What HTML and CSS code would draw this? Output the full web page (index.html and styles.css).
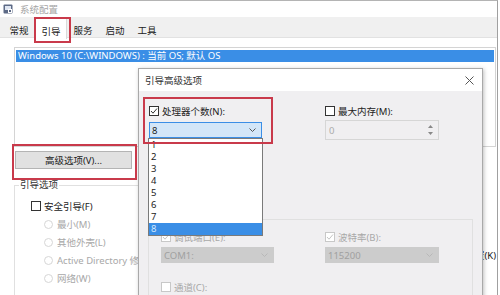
FILE: index.html
```html
<!DOCTYPE html>
<html lang="zh-CN">
<head>
  <meta charset="UTF-8" />
  <title>系统配置</title>
  <link rel="stylesheet" href="styles.css">
</head>
<body>
  <div class="window">
    <div class="titlebar">
      <svg class="app-icon" width="10" height="10" viewBox="0 0 10 10">
        <rect x="0.5" y="0.5" width="9" height="9" rx="1" fill="#5d6a86"/>
        <rect x="2" y="2" width="6" height="4" fill="#dfe6f2"/>
        <rect x="5" y="5" width="4" height="4" fill="#fff"/>
        <rect x="6" y="6" width="2" height="2" fill="#5d6a86"/>
      </svg>
      <span>系统配置</span>
    </div>

    <div class="tabs">
      <div class="tab">常规</div>
      <div class="tab active">引导</div>
      <div class="tab">服务</div>
      <div class="tab">启动</div>
      <div class="tab">工具</div>
    </div>

    <div class="page">
      <div class="boot-list">
        <div class="boot-item selected">Windows 10 (C:\WINDOWS) : 当前 OS; 默认 OS</div>
      </div>

      <button class="btn">高级选项(V)...</button>

      <div class="lower">
        <fieldset class="group boot-options">
          <legend>引导选项</legend>
          <div class="check-row"><span class="box"></span>安全引导(F)</div>
          <div class="radio-row"><span class="dot"></span>最小(M)</div>
          <div class="radio-row"><span class="dot"></span>其他外壳(L)</div>
          <div class="radio-row"><span class="dot"></span>Active Directory 修复</div>
          <div class="radio-row"><span class="dot"></span>网络(W)</div>
        </fieldset>
        <div class="side">
          <div class="perm">使所有引导设置成为永久设置(K)</div>
        </div>
      </div>
    </div>

    <!-- red annotation boxes -->
    <div class="mark mark-tab"></div>
    <div class="mark mark-btn"></div>

    <!-- Advanced options dialog -->
    <div class="dialog">
      <div class="dlg-title">
        <span>引导高级选项</span>
        <svg width="9" height="9" viewBox="0 0 9 9">
          <path d="M0.5 0.5 L8.5 8.5 M8.5 0.5 L0.5 8.5" stroke="#555" stroke-width="1" fill="none"/>
        </svg>
      </div>

      <div class="dlg-body">
        <div class="opt-grid top-grid">
          <div class="col">
            <div class="check-row">
              <span class="box">
                <svg width="8" height="8" viewBox="0 0 8 8"><path d="M1 4 L3 6.2 L7 1.5" stroke="#333" stroke-width="1" fill="none"/></svg>
              </span>处理器个数(N):
            </div>
            <div class="combo focus">
              <span>8</span>
              <svg width="7" height="4" viewBox="0 0 7 4"><path d="M0.5 0.5 L3.5 3.5 L6.5 0.5" stroke="#555" fill="none"/></svg>
            </div>
          </div>
          <div class="col">
            <div class="check-row"><span class="box"></span>最大内存(M):</div>
            <div class="spin">
              <span>0</span>
              <div class="arrows">
                <svg width="5" height="3" viewBox="0 0 5 3"><path d="M0 3 L2.5 0 L5 3 Z" fill="#888"/></svg>
                <svg width="5" height="3" viewBox="0 0 5 3"><path d="M0 0 L2.5 3 L5 0 Z" fill="#888"/></svg>
              </div>
            </div>
          </div>
        </div>

        <fieldset class="group debug">
          <legend>调试全局设置</legend>
          <div class="opt-grid debug-grid">
            <div class="col">
              <div class="check-row disabled">
                <span class="box">
                  <svg width="8" height="8" viewBox="0 0 8 8"><path d="M1 4 L3 6.2 L7 1.5" stroke="#c4c4c4" stroke-width="1" fill="none"/></svg>
                </span>调试端口(E):
              </div>
              <div class="combo off">
                <span>COM1:</span>
                <svg width="7" height="4" viewBox="0 0 7 4"><path d="M0.5 0.5 L3.5 3.5 L6.5 0.5" stroke="#b8b8b8" fill="none"/></svg>
              </div>
            </div>
            <div class="col">
              <div class="check-row disabled">
                <span class="box">
                  <svg width="8" height="8" viewBox="0 0 8 8"><path d="M1 4 L3 6.2 L7 1.5" stroke="#c4c4c4" stroke-width="1" fill="none"/></svg>
                </span>波特率(B):
              </div>
              <div class="combo off">
                <span>115200</span>
                <svg width="7" height="4" viewBox="0 0 7 4"><path d="M0.5 0.5 L3.5 3.5 L6.5 0.5" stroke="#b8b8b8" fill="none"/></svg>
              </div>
            </div>
          </div>
          <div class="check-row disabled channel"><span class="box"></span>通道(C):</div>
        </fieldset>
      </div>

      <div class="drop-list">
        <div class="drop-item">1</div>
        <div class="drop-item">2</div>
        <div class="drop-item">3</div>
        <div class="drop-item">4</div>
        <div class="drop-item">5</div>
        <div class="drop-item">6</div>
        <div class="drop-item">7</div>
        <div class="drop-item selected">8</div>
      </div>

      <div class="mark mark-cpu"></div>
    </div>
  </div>
</body>
</html>
```

FILE: styles.css
```css
* {
  box-sizing: border-box;
  margin: 0;
  padding: 0;
}

body {
  width: 500px;
  height: 295px;
  overflow: hidden;
  background-color: #fff;
  font-family: "Noto Sans", "Noto Sans CJK SC", sans-serif;
  font-size: 9.5px;
  color: #222;
}

.window {
  position: relative;
  width: 498px;
  height: 295px;
  border-top: 1px solid #b4b4b4;
  border-right: 1px solid #a0a0a0;
  overflow: hidden;
}

.titlebar {
  height: 16px;
  display: flex;
  align-items: center;
  gap: 7px;
  padding-left: 3px;
  color: #a6a6a6;
}

.tabs {
  display: flex;
  height: 21px;
  padding-left: 3px;
  background-color: #f0f0f0;
  border-bottom: 1px solid #e2e2e2;
}

.tab {
  width: 32px;
  height: 21px;
  padding-top: 6px;
  line-height: 15px;
  text-align: center;
}

.tab.active {
  height: 22px;
  background-color: #fff;
  border: 1px solid #dadada;
  border-bottom: none;
}

.page {
  padding: 0 1px 0 14px;
}

.boot-list {
  margin-top: 9px;
  height: 100px;
  padding: 2px 1px;
  border: 1px solid #d4d4d4;
}

.boot-item {
  height: 12px;
  line-height: 12px;
  padding-left: 2px;
  white-space: nowrap;
}

.boot-item.selected {
  background-color: #3a8ee6;
  color: #fff;
}

.btn {
  display: block;
  width: 117px;
  height: 18px;
  margin: 4px 0 0 1px;
  background-color: #e1e1e1;
  border: 1px solid #b4b4b4;
  font: inherit;
  color: #222;
}

.lower {
  display: flex;
  margin-top: 9px;
}

.group {
  border: 1px solid #e0e0e0;
}

.group legend {
  line-height: 14px;
  padding: 0 1px;
  color: #333;
}

.boot-options {
  width: 300px;
  height: 130px;
  padding: 5px 0 0 16px;
}

.boot-options legend {
  margin-left: -12px;
}

.check-row {
  display: flex;
  align-items: center;
  gap: 3px;
  height: 14px;
  white-space: nowrap;
}

.boot-options .check-row {
  height: 18px;
}

.box {
  display: flex;
  align-items: center;
  justify-content: center;
  width: 10px;
  height: 10px;
  border: 1px solid #333;
  background-color: #fff;
}

.radio-row {
  display: flex;
  align-items: center;
  gap: 4px;
  height: 18px;
  padding-left: 13px;
  color: #a8a8a8;
  white-space: nowrap;
}

.dot {
  width: 9px;
  height: 9px;
  border: 1px solid #d6d6d6;
  border-radius: 50%;
  background-color: #fff;
}

.side {
  flex: 1;
  display: flex;
  justify-content: flex-end;
  padding-top: 71px;
}

.perm {
  line-height: 14px;
  white-space: nowrap;
}

.mark {
  position: absolute;
  border: 2px solid #c93a4b;
  z-index: 5;
}

.mark-tab {
  left: 34px;
  top: 16px;
  width: 37px;
  height: 26px;
}

.mark-btn {
  left: 12px;
  top: 143px;
  width: 125px;
  height: 36px;
}

/* dialog */
.dialog {
  position: absolute;
  left: 138px;
  top: 67px;
  width: 345px;
  height: 240px;
  background-color: #f0eff1;
  border: 1px solid #a9a9a9;
  box-shadow: 1px 1px 4px rgba(0, 0, 0, 0.25);
  z-index: 3;
}

.dlg-title {
  display: flex;
  align-items: center;
  justify-content: space-between;
  height: 22px;
  padding: 0 8px 0 6px;
  background-color: #fff;
  color: #333;
}

.dlg-body {
  padding: 13px 0 0 10px;
}

.opt-grid {
  display: grid;
  grid-template-columns: 113px 114px;
}

.top-grid {
  column-gap: 63px;
}

.combo {
  display: flex;
  align-items: center;
  justify-content: space-between;
  height: 16px;
  margin-top: 4px;
  padding: 0 5px 0 2px;
}

.combo.focus {
  background-color: #d3e6f8;
  border: 1px solid #3b8ee6;
}

.combo.off {
  margin-top: 3px;
  background-color: #cccccc;
  border: 1px solid #cccccc;
  color: #a0a0a0;
}

.spin {
  display: flex;
  align-items: center;
  justify-content: space-between;
  height: 20px;
  margin-top: 2px;
  padding: 0 5px 0 3px;
  border: 1px solid #d6d6d6;
  color: #ababab;
}

.arrows {
  display: flex;
  flex-direction: column;
  gap: 4px;
}

.debug {
  width: 325px;
  height: 120px;
  margin: 72px 0 0 -1px;
  padding: 4px 0 0 12px;
}

.debug legend {
  margin-left: -6px;
}

.debug-grid {
  column-gap: 51px;
}

.check-row.disabled {
  color: #a8a8a8;
}

.check-row.disabled .box {
  border-color: #c8c8c8;
}

.channel {
  margin-top: 17px;
}

.drop-list {
  position: absolute;
  left: 9px;
  top: 69px;
  width: 115px;
  border: 1px solid #7a7a7a;
  background-color: #fff;
  z-index: 4;
}

.drop-item {
  height: 12px;
  line-height: 12px;
  padding-left: 2px;
}

.drop-item.selected {
  background-color: #3a8ee6;
  color: #d4e8fc;
}

.mark-cpu {
  left: 4px;
  top: 28px;
  width: 130px;
  height: 47px;
}
```
